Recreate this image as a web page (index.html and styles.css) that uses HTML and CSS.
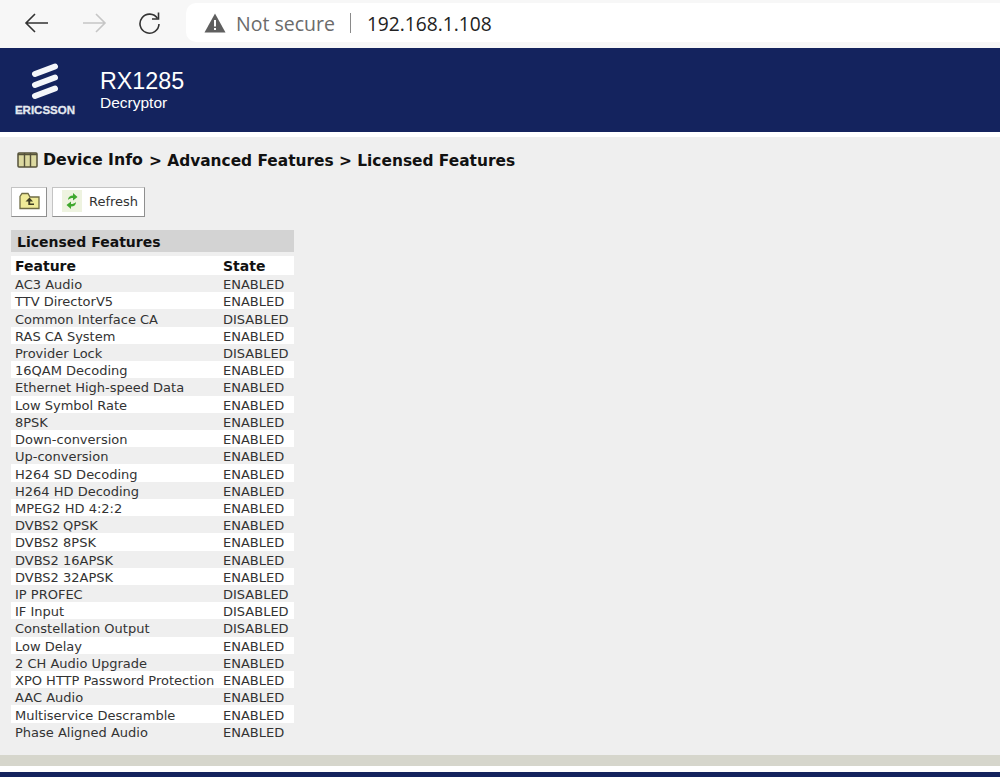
FILE: index.html
```html
<!DOCTYPE html>
<html lang="en">
<head>
<meta charset="utf-8">
<title>RX1285 Decryptor</title>
<link rel="stylesheet" href="styles.css">
</head>
<body>
<div class="chrome">
  <svg class="nav-icon back" width="26" height="24" viewBox="0 0 26 24"><path d="M24 12H2M11 3l-9 9 9 9" fill="none" stroke="#333" stroke-width="1.6"/></svg>
  <svg class="nav-icon forward" width="26" height="24" viewBox="0 0 26 24"><path d="M2 12h21M15 3l9 9-9 9" fill="none" stroke="#c6c6c6" stroke-width="1.6"/></svg>
  <svg class="nav-icon reload" width="24" height="24" viewBox="0 0 24 24"><path d="M19.5 7.500A9.500 9.500 0 1 0 21 13" fill="none" stroke="#333" stroke-width="1.6"/><path d="M20.500 1.500v6.500h-6.500" fill="none" stroke="#333" stroke-width="1.6"/></svg>
  <div class="omnibox">
    <svg class="warn" width="22" height="20" viewBox="0 0 22 20"><path d="M11 0.5L21.5 19.5H0.5Z" fill="#5f5f5f"/><path d="M10 7h2v6.5h-2zM10 15h2v2h-2z" fill="#fff"/></svg>
    <span class="not-secure">Not secure</span>
    <span class="sep"></span>
    <span class="address">192.168.1.108</span>
  </div>
</div>
<header class="banner">
  <div class="logo">
    <svg width="32" height="38" viewBox="0 0 32 38"><g stroke="#f4f6fa" stroke-width="6" stroke-linecap="round"><path d="M6 11L26 3.500"/><path d="M6 22L26 14.500"/><path d="M6 33L26 25.500"/></g></svg>
    <span class="logo-text">ERICSSON</span>
  </div>
  <div class="product">
    <div class="product-name">RX1285</div>
    <div class="product-sub">Decryptor</div>
  </div>
</header>
<main class="content">
  <div class="crumbs">
    <svg class="crumb-icon" width="21" height="16" viewBox="0 0 21 16"><rect x="1" y="1" width="19" height="14" rx="1" fill="#dcd9a0" stroke="#55523a" stroke-width="1.5"/><path d="M7.500 1v14M13.500 1v14" stroke="#55523a" stroke-width="1.4"/><path d="M1 2.500h19" stroke="#55523a" stroke-width="1.5"/></svg>
    <span class="crumb-first">Device Info</span>
    <span class="crumb-rest">&gt; Advanced Features &gt; Licensed Features</span>
  </div>
  <div class="toolbar">
    <button class="tool tool-up" type="button" aria-label="Up">
      <svg width="21" height="18" viewBox="0 0 21 18"><path d="M1 4.500V16.500H20V5H11L9 1.500H3Z" fill="#f0eb98" stroke="#6f6c44" stroke-width="1.300"/><path d="M10.500 5.500L6.500 9.500H9.300V13H15V11.500H11.200V9.500H14Z" fill="#3f3e24"/></svg>
    </button>
    <button class="tool tool-refresh" type="button">
      <span class="refresh-icon"><svg width="14" height="18" viewBox="0 0 14 18"><path d="M3 8C3 5 5 3.500 8 3.500V1L12.500 5 8 8.500V6C6 6 4.500 6.500 3 8Z" fill="#3fa82e"/><path d="M11 10C11 13 9 14.500 6 14.500V17L1.500 13 6 9.500V12C8 12 9.500 11.500 11 10Z" fill="#3fa82e"/></svg></span>
      <span>Refresh</span>
    </button>
  </div>
  <section class="panel">
    <h2 class="panel-title">Licensed Features</h2>
    <table class="features">
      <thead><tr><th class="col-feature">Feature</th><th>State</th></tr></thead>
      <tbody>
        <tr><td>AC3 Audio</td><td>ENABLED</td></tr>
        <tr><td>TTV DirectorV5</td><td>ENABLED</td></tr>
        <tr><td>Common Interface CA</td><td>DISABLED</td></tr>
        <tr><td>RAS CA System</td><td>ENABLED</td></tr>
        <tr><td>Provider Lock</td><td>DISABLED</td></tr>
        <tr><td>16QAM Decoding</td><td>ENABLED</td></tr>
        <tr><td>Ethernet High-speed Data</td><td>ENABLED</td></tr>
        <tr><td>Low Symbol Rate</td><td>ENABLED</td></tr>
        <tr><td>8PSK</td><td>ENABLED</td></tr>
        <tr><td>Down-conversion</td><td>ENABLED</td></tr>
        <tr><td>Up-conversion</td><td>ENABLED</td></tr>
        <tr><td>H264 SD Decoding</td><td>ENABLED</td></tr>
        <tr><td>H264 HD Decoding</td><td>ENABLED</td></tr>
        <tr><td>MPEG2 HD 4:2:2</td><td>ENABLED</td></tr>
        <tr><td>DVBS2 QPSK</td><td>ENABLED</td></tr>
        <tr><td>DVBS2 8PSK</td><td>ENABLED</td></tr>
        <tr><td>DVBS2 16APSK</td><td>ENABLED</td></tr>
        <tr><td>DVBS2 32APSK</td><td>ENABLED</td></tr>
        <tr><td>IP PROFEC</td><td>DISABLED</td></tr>
        <tr><td>IF Input</td><td>DISABLED</td></tr>
        <tr><td>Constellation Output</td><td>DISABLED</td></tr>
        <tr><td>Low Delay</td><td>ENABLED</td></tr>
        <tr><td>2 CH Audio Upgrade</td><td>ENABLED</td></tr>
        <tr><td>XPO HTTP Password Protection</td><td>ENABLED</td></tr>
        <tr><td>AAC Audio</td><td>ENABLED</td></tr>
        <tr><td>Multiservice Descramble</td><td>ENABLED</td></tr>
        <tr><td>Phase Aligned Audio</td><td>ENABLED</td></tr>
      </tbody>
    </table>
  </section>
</main>
<div class="foot-strip"></div>
<div class="foot-gap"></div>
<div class="foot-bar"></div>
</body>
</html>
```
FILE: styles.css
```css
html, body { margin: 0; padding: 0; height: 777px; overflow: hidden; }
body { background: #fff; font-family: "DejaVu Sans", Verdana, sans-serif; color: #333; }

.chrome { height: 48px; background: #f7f7f7; display: flex; align-items: center; box-sizing: border-box; padding-left: 24px; }
.nav-icon { display: block; flex: none; margin-bottom: 2px; }
.forward { margin-left: 31px; }
.reload { margin-left: 31px; }
.omnibox { margin-left: 24px; flex: 1; height: 39px; margin-bottom: 3px; box-sizing: border-box; padding: 1px 0 0 18px; background: #fff; border-radius: 10px 0 0 10px; display: flex; align-items: center; }
.warn { flex: none; }
.not-secure { margin-left: 10px; font-family: "Open Sans", sans-serif; font-size: 19.5px; color: #6b6b6b; }
.sep { width: 1px; height: 20px; background: #8a8a8a; margin: 0 16px 0 15px; }
.address { font-family: "Open Sans", sans-serif; font-size: 19.2px; color: #222; }

.banner { height: 84px; background: #14235e; display: flex; color: #fff; }
.logo { width: 90px; display: flex; flex-direction: column; align-items: center; padding-top: 15px; box-sizing: border-box; }
.logo svg { display: block; }
.logo-text { font-family: "Liberation Sans", Arial, sans-serif; font-weight: 700; font-size: 11.5px; line-height: 14px; margin-top: 2px; color: #e4e8f0; -webkit-text-stroke: 0.3px #e4e8f0; }
.product { margin-left: 10px; padding-top: 19px; font-family: "Liberation Sans", Arial, sans-serif; }
.product-name { font-size: 23.3px; line-height: 28px; }
.product-sub { font-size: 15.5px; line-height: 16px; }

.content { margin-top: 5px; height: 618px; background: #efefef; box-sizing: border-box; padding: 13px 0 0 11px; overflow: hidden; }
.crumbs { display: flex; align-items: center; height: 20px; padding-left: 6px; font-weight: 700; color: #111; }
.crumb-icon { flex: none; margin-right: 5px; }
.crumb-first { font-size: 15.8px; position: relative; top: -1px; margin-right: 6px; }
.crumb-rest { font-size: 15.4px; position: relative; top: 1px; }

.toolbar { display: flex; gap: 5px; margin-top: 17px; }
.tool { height: 30px; background: #fff; border: 1px solid #c4c4c4; border-right-color: #8f8f8f; border-bottom-color: #8f8f8f; padding: 0 0 2px; display: flex; align-items: center; box-sizing: border-box; font-family: inherit; font-size: 13px; color: #333; }
.tool-up { width: 36px; justify-content: center; }
.tool-refresh { width: 93px; padding-left: 9px; }
.refresh-icon { width: 20px; height: 22px; background: #eef3e0; display: flex; align-items: center; justify-content: center; margin-right: 7px; }

.panel { width: 283px; margin-top: 13px; }
.panel-title { margin: 0; height: 22px; box-sizing: border-box; background: #d3d3d3; font-size: 14px; line-height: 24px; padding-left: 6px; color: #111; font-weight: 700; }
.features { border-collapse: collapse; width: 283px; margin-top: 4px; table-layout: fixed; }
.features th, .features td { padding: 0 0 0 4px; text-align: left; white-space: nowrap; }
.features th { font-size: 14px; font-weight: 700; color: #111; background: #fff; height: 17px; line-height: 17px; padding-top: 2px; }
.col-feature { width: 204px; }
.features td { font-size: 13px; height: 15.23px; line-height: 15px; padding-top: 2px; color: #333; }
.features tbody tr:nth-child(even) { background: #fff; }

.foot-strip { height: 11px; background: #d6d6cc; }
.foot-gap { height: 6px; background: #fff; }
.foot-bar { height: 5px; background: #14235e; }
```
